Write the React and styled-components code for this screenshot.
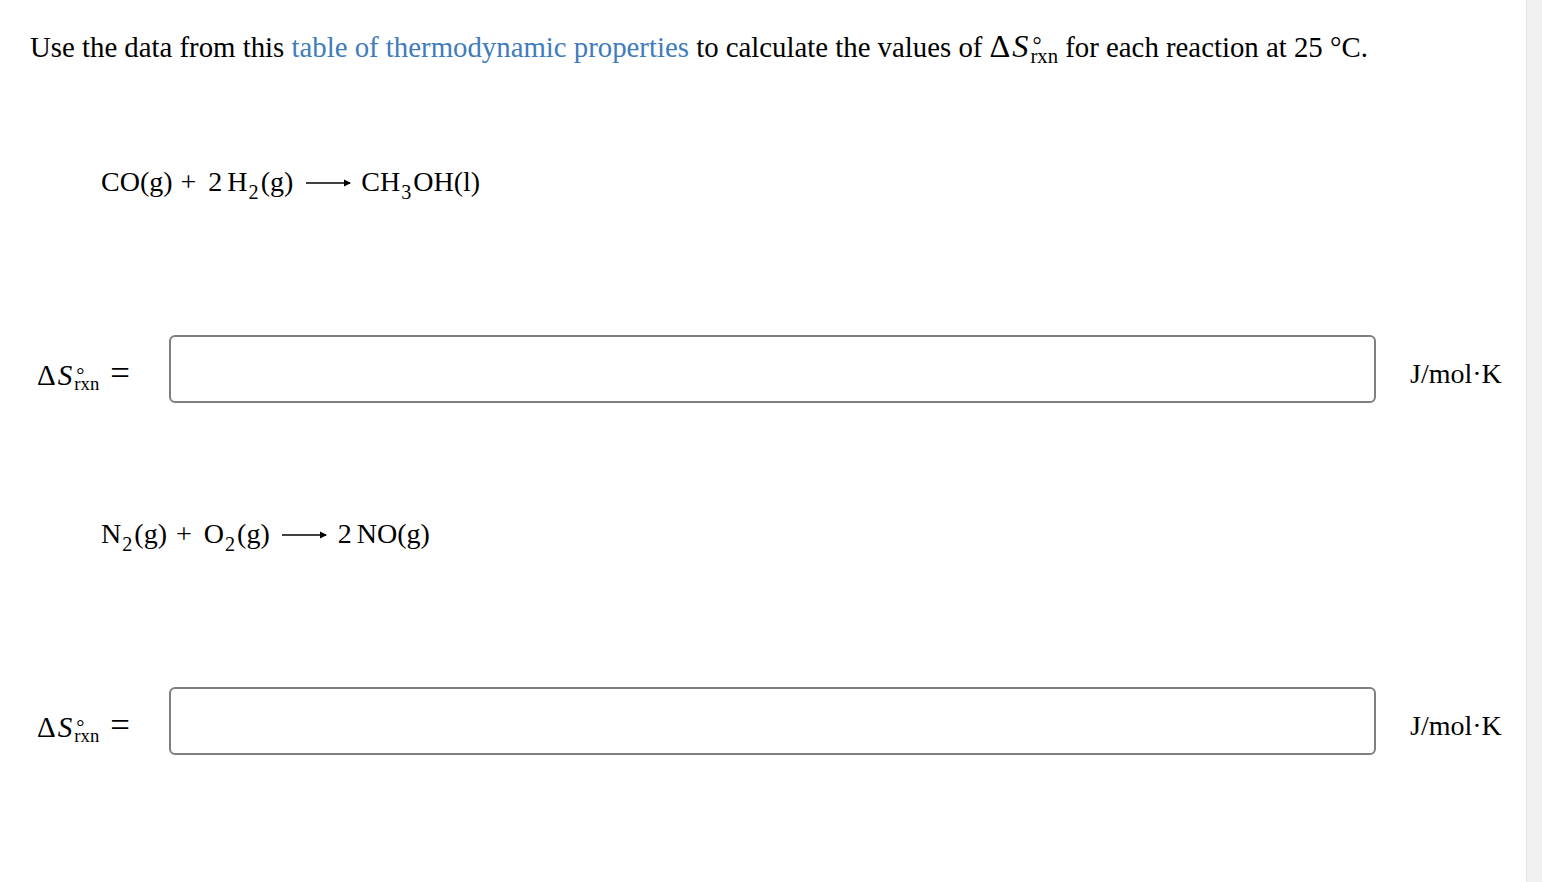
import React from 'react';
import styled, { createGlobalStyle } from 'styled-components';

const GlobalStyle = createGlobalStyle`
  html, body {
    margin: 0;
    padding: 0;
    background: #ffffff;
    overflow: hidden;
  }
  body {
    font-family: "Liberation Serif", "Times New Roman", serif;
    color: #000;
  }
`;

const Frame = styled.div`
  display: flex;
  width: 1542px;
  height: 882px;
`;

const Page = styled.div`
  flex: 1;
  padding: 27px 24px 0 30px;
  box-sizing: border-box;
`;

const ScrollTrack = styled.div`
  width: 15px;
  height: 100%;
  background: #f1f1f1;
  border-left: 1px solid #e3e3e3;
`;

const Intro = styled.p`
  margin: 0;
  font-size: 28.8px;
  line-height: 40px;
  white-space: nowrap;
`;

const Link = styled.a`
  color: #3f7cbc;
  text-decoration: none;
`;

const Equation = styled.div`
  display: flex;
  align-items: baseline;
  margin: ${(p) => p.$top}px 0 0 71px;
  font-size: 28px;
  line-height: 40px;
  white-space: pre;
`;

const Sub = styled.span`
  font-size: 0.72em;
  position: relative;
  top: 0.4em;
  line-height: 0;
  margin: 0 2px 0 1px;
`;

const Op = styled.span`
  margin: 0 12px 0 ${(p) => p.$gap || 8}px;
`;

const Coef = styled.span`
  margin-right: 5px;
`;

const Arrow = styled.svg`
  width: 46px;
  height: 12px;
  margin: 0 ${(p) => p.$right}px 0 ${(p) => p.$left}px;
  align-self: center;
  position: relative;
  top: 1px;
`;

const AnswerRow = styled.div`
  display: flex;
  align-items: center;
  margin-top: ${(p) => p.$top}px;
`;

const Label = styled.div`
  width: 139px;
  padding-left: 7px;
  box-sizing: border-box;
  font-size: 26px;
  display: flex;
  align-items: baseline;
  position: relative;
  top: 5px;
`;

const Quantity = styled.span`
  display: inline-flex;
  align-items: baseline;
`;

const Delta = styled.span`
  font-size: 1.12em;
  line-height: 1;
`;

const Italic = styled.i`
  font-style: italic;
  font-size: 1.12em;
  line-height: 1;
  margin-left: 2px;
  letter-spacing: 2px;
`;

const Scripts = styled.span`
  display: inline-block;
  position: relative;
  font-size: 0.72em;
  line-height: 1;
`;

const Deg = styled.span`
  position: absolute;
  left: 2px;
  top: -0.22em;
  font-size: 1.1em;
`;

const Rxn = styled.span`
  position: relative;
  top: 0.28em;
`;

const Equals = styled.span`
  margin-left: 11px;
  font-size: 1.34em;
  line-height: 1;
`;

const Input = styled.input`
  width: 1207px;
  height: 68px;
  box-sizing: border-box;
  border: 2px solid #7f7f7f;
  border-radius: 6px;
  background: #fff;
  outline: none;
  font-family: inherit;
  font-size: 24px;
  padding: 0 10px;
`;

const Unit = styled.div`
  margin-left: 34px;
  font-size: 28px;
  position: relative;
  top: 5px;
`;

function DeltaS() {
  return (
    <Quantity>
      <Delta>Δ</Delta>
      <Italic>S</Italic>
      <Scripts>
        <Deg>°</Deg>
        <Rxn>rxn</Rxn>
      </Scripts>
    </Quantity>
  );
}

function LongArrow({ left, right }) {
  return (
    <Arrow viewBox="0 0 46 12" $left={left} $right={right}>
      <line x1="0" y1="6" x2="44" y2="6" stroke="#000" strokeWidth="1.3" />
      <path d="M38 2.5 L45 6 L38 9.5 Z" fill="#000" />
    </Arrow>
  );
}

function Answer({ top }) {
  return (
    <AnswerRow $top={top}>
      <Label>
        <DeltaS />
        <Equals>=</Equals>
      </Label>
      <Input type="text" />
      <Unit>J/mol·K</Unit>
    </AnswerRow>
  );
}

export default function App() {
  return (
    <Frame>
      <GlobalStyle />
      <Page>
        <Intro>
          Use the data from this <Link href="#">table of thermodynamic properties</Link> to calculate
          the values of <DeltaS /> for each reaction at 25 °C.
        </Intro>

        {/* reaction 1 */}
        <Equation $top={95}>
          CO(g)
          <Op>+</Op>
          <Coef>2</Coef>H<Sub>2</Sub>(g)
          <LongArrow left={13} right={9} />
          CH<Sub>3</Sub>OH(l)
        </Equation>
        <Answer top={133} />

        {/* reaction 2 */}
        <Equation $top={111}>
          N<Sub>2</Sub>(g)
          <Op $gap={9}>+</Op>
          O<Sub>2</Sub>(g)
          <LongArrow left={12} right={10} />
          <Coef>2</Coef>NO(g)
        </Equation>
        <Answer top={133} />
      </Page>
      <ScrollTrack />
    </Frame>
  );
}
